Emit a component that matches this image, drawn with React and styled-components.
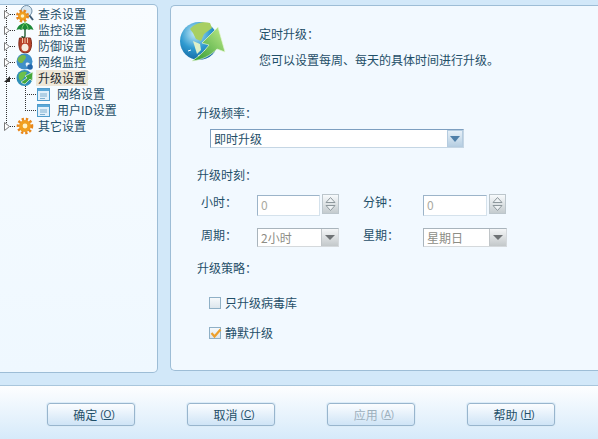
import React from "react";
import styled, { createGlobalStyle } from "styled-components";

const Global = createGlobalStyle`
  html, body { margin: 0; padding: 0; background: #d2e8f9; }
  * { box-sizing: border-box; }
  body { font-family: "Noto Sans CJK SC", "Liberation Sans", sans-serif; font-size: 12px; color: #1f4f68; }
`;

const Dialog = styled.div`
  width: 598px; height: 439px; display: flex; flex-direction: column; overflow: hidden;
  background: #d2e8f9; line-height: 16px;
`;
const Main = styled.div`
  height: 386px; flex: none; display: flex; align-items: flex-start; border-bottom: 1px solid #a9c6dc;
  padding-top: 4px;
`;
const Sidebar = styled.nav`
  width: 158px; height: 369px; flex: none; background: linear-gradient(#f8fcff, #eff8ff);
  border: 1px solid #9dbdd6; border-left: none; border-radius: 0 5px 5px 0; padding-top: 1px;
`;
const Panel = styled.section`
  width: 428px; height: 366px; margin: 1px 0 0 12px; flex: none; background: #f2f9ff;
  border: 1px solid #9dbdd6; border-right: none; border-radius: 5px 0 0 5px; padding: 14px 0 0 9px;
`;
const Row = styled.div`
  height: 16px; display: flex; align-items: center; flex: none;
`;
const Label = styled.span`
  margin-left: ${p => p.$gap ?? 4}px; height: 16px; line-height: 15px; padding: 0 2px;
  background: ${p => (p.$active ? "#efe8d9" : "transparent")};
  color: ${p => (p.$active ? "#1d2b30" : "#1f4f68")};
`;
const Head = styled.header`
  display: flex; height: 77px;
`;
const HeadText = styled.div`
  margin-left: 31px; padding-top: 6px; display: flex; flex-direction: column; gap: 10px;
`;
const Line = styled.p`
  margin: 0; height: 16px; line-height: 16px;
`;
const Form = styled.div`
  padding-left: 17px;
`;
const Heading = styled.h3`
  margin: ${p => p.$top ?? 0}px 0 0; font-size: 12px; font-weight: 400; height: 16px; line-height: 16px;
`;
const Freq = styled.div`
  margin: 8px 0 0 13px; width: 254px; height: 19px; display: flex; background: #fff;
  border: 1px solid #c5d6e4; border-top-color: #7d9fc0; border-left-color: #7d9fc0; padding-left: 3px;
  align-items: center; justify-content: space-between; color: #1f4f68;
`;
const DropBlue = styled.div`
  width: 16px; height: 17px; background: linear-gradient(#e6f0f8, #b7cfe2); border: 1px solid #b5cce0;
  display: flex; align-items: center; justify-content: center;
  &::after { content: ""; border: 5px solid transparent; border-top: 6px solid #4f7fa8; border-bottom: 0; }
`;
const Grid = styled.div`
  margin: 11px 0 0 4px; display: grid; grid-template-columns: 56px 82px 24px 60px 84px; grid-auto-rows: 21px; row-gap: 12px;
  align-items: center;
`;
const FieldLabel = styled.span`
  height: 16px; line-height: 16px; margin-top: -5px;
`;
const Spin = styled.div`
  display: flex; gap: 2px; align-items: flex-start;
`;
const NumInput = styled.div`
  width: 64px; height: 21px; background: #fff; color: #a9a9a0; padding-left: 3px; line-height: 18px;
  border: 1px solid #d5e2ec; border-top-color: #9cb4c9; border-left-color: #9cb4c9;
  margin-top: 1px;
`;
const SpinBtn = styled.div`
  width: 17px; height: 20px; border: 1px solid #bcc6cc; background: linear-gradient(#f7fafc, #c4cbce);
  display: flex; flex-direction: column; align-items: center; justify-content: center; gap: 2px;
`;
const Select = styled.div`
  width: ${p => p.$w}px; height: 19px; display: flex; justify-content: space-between; align-items: center;
  background: #fff; color: #8d8d85; padding-left: 3px; border: 1px solid #d5d9dc; border-left-color: #a9b4bc; border-top-color: #a9b4bc;
`;
const DropGray = styled.div`
  width: 17px; height: 17px; background: linear-gradient(#f4f6f7, #c3c8ca); border-left: 1px solid #c0c5c8;
  display: flex; align-items: center; justify-content: center;
  &::after { content: ""; border: 5px solid transparent; border-top: 5px solid #6f7375; border-bottom: 0; }
`;
const Check = styled.label`
  margin: ${p => p.$top}px 0 0 12px; display: flex; align-items: center; gap: 4px; height: 16px; color: #1f4f68;
`;
const Box = styled.span`
  width: 12px; height: 12px; flex: none; border: 1px solid #8fb0c6; background: linear-gradient(#f6f9fb, #dde6ec);
  display: block; overflow: visible;
  svg { display: block; margin: -1px 0 0 0; }
`;
const Footer = styled.footer`
  flex: 1; background: linear-gradient(#fdfeff, #d6eafa); display: flex; padding: 17px 0 0 47px; gap: 52px;
`;
const Btn = styled.button`
  width: 88px; height: 23px; padding: 0 0 0 6px; font: inherit; line-height: 19px;
  color: ${p => (p.disabled ? "#9db0bd" : "#1f4f68")};
  background: linear-gradient(#fbfdff, #cfe4f6); border: 1px solid #98b5cd; border-radius: 3px;
  box-shadow: 0 0 0 1px #dcecf8; display: flex; align-items: center; justify-content: center; gap: 3px;
  u { font-family: "Liberation Sans", sans-serif; text-decoration: none; font-size: 10px; }
  u b { font-weight: 400; text-decoration: underline; }
`;
const Glyph = styled.svg`
  flex: none; display: block;
`;

const Guide = ({ exp, last, sub, subLast, open }) => (
  <Glyph width={sub ? 37 : 16} height="16" viewBox={`0 0 ${sub ? 37 : 16} 16`}>
    <g stroke="#333" strokeWidth="1" strokeDasharray="1 1" fill="none">
      {!last && <line x1="6.5" y1={0} x2="6.5" y2={16} />}
      {last && <line x1="6.5" y1={0} x2="6.5" y2={8} />}
      {sub ? (
        <>
          <line x1="25.5" y1="0" x2="25.5" y2={subLast ? 8 : 16} />
          <line x1="25" y1="8.5" x2="37" y2="8.5" />
        </>
      ) : (
        <line x1="10" y1="8.5" x2="16" y2="8.5" />
      )}
    </g>
    {exp && (open ? (
      <polygon points="4,12 10,6 10,12" fill="#2a2a2a" />
    ) : (
      <polygon points="4.5,4.5 4.5,12.5 9.5,8.5" fill="#fff" stroke="#7a7a7a" />
    ))}
  </Glyph>
);

const Gear = ({ x = 0, y = 0, r = 5 }) => (
  <g transform={`translate(${x} ${y})`}>
    <circle r={r} fill="#f0a020" />
    <circle r={r} fill="none" stroke="#e8861a" strokeWidth="2.4" strokeDasharray="2 1.6" transform="scale(1.15)" />
    <circle r={r * 0.4} fill="#fff3c8" />
  </g>
);

const IconScan = () => (
  <Glyph width="18" height="18" viewBox="0 0 18 18">
    <circle cx="10.5" cy="6" r="5.500" fill="#d6e6f2" stroke="#6f8ea6" />
    <line x1="13.5" y1="10.5" x2="17" y2="15" stroke="#3c5a74" strokeWidth="2" />
    <Gear x={6.5} y={11} r={4.500} />
  </Glyph>
);
const IconUmbrella = () => (
  <Glyph width="18" height="18" viewBox="0 0 18 18">
    <path d="M0.500 9C2 4 6 2 9 2s7 2 8.500 7c-2-1-3.500-1-4.500 0-1-1-3-1-4 0-1-1-3-1-4 0-1-1-2.500-1-4.500 0z" fill="#1c8a38" />
    <path d="M9 0v2M9 2c-2 2-3 4-3 6M9 2c2 2 3 4 3 6" stroke="#7ccf6a" fill="none" />
    <path d="M9 8v7c0 2-3 2-3 0" stroke="#1f5a30" strokeWidth="1.4" fill="none" />
  </Glyph>
);
const IconGlove = () => (
  <Glyph width="18" height="18" viewBox="0 0 18 18">
    <path d="M3.500 1h11c1.500 4 1.500 9-.5 12.500-1 3-7.500 3-9.500.5C2.500 11 2.500 5 3.500 1z" fill="#b8432a" stroke="#7d2c1c" />
    <path d="M6.500 1v5M9 1v5M11.500 1v5" stroke="#f2c8a8" />
    <ellipse cx="9" cy="10.500" rx="3.500" ry="3.800" fill="#f6ede0" />
  </Glyph>
);
const IconGlobe = () => (
  <Glyph width="18" height="18" viewBox="0 0 18 18">
    <circle cx="8.500" cy="8.500" r="8" fill="#3f8fc9" />
    <path d="M3 4c3-3 7-2 7 0s-2 3-3 5-4 1-5-1 0-3 1-4z" fill="#76b84a" />
    <path d="M10 10c2-1 4 0 4 2s-2 3-3 2-2-3-1-4z" fill="#e8f2f8" />
    <circle cx="14" cy="14" r="2.800" fill="#2266aa" />
  </Glyph>
);
const IconUpdate = () => (
  <Glyph width="18" height="18" viewBox="0 0 18 18">
    <circle cx="8.500" cy="9" r="8" fill="#2f8fb8" />
    <path d="M3 5c2-3 6-3 8-2l-3 6-3 3c-2-1-3-4-2-7z" fill="#6cc04a" />
    <path d="M5 13l6-4-2-2 8-4-1 9-2-2-5 5c-1 0-3-1-4-2z" fill="#43a83a" stroke="#e9f7e2" strokeWidth=".7" />
  </Glyph>
);
const IconDoc = () => (
  <Glyph width="13" height="13" viewBox="0 0 13 13">
    <rect x=".5" y=".5" width="12" height="12" fill="#e2f0fa" stroke="#4f9ccc" />
    <rect x="1" y="1" width="11" height="2" fill="#5aa8d8" />
    <path d="M3 6h7M3 8h7M3 10.500h5" stroke="#7fb0d0" />
  </Glyph>
);
const IconOther = () => (
  <Glyph width="18" height="18" viewBox="-9 -9 18 18">
    <Gear r={6} />
  </Glyph>
);
const IconLarge = () => (
  <Glyph width="48" height="44" viewBox="0 0 48 44">
    <defs>
      <radialGradient id="g" cx=".4" cy=".3" r=".8">
        <stop offset="0" stopColor="#c8ecf8" />
        <stop offset=".5" stopColor="#2f9ad0" />
        <stop offset="1" stopColor="#105c98" />
      </radialGradient>
      <linearGradient id="a" x1="0" y1="1" x2="1" y2="0">
        <stop offset="0" stopColor="#2f9a32" />
        <stop offset="1" stopColor="#c2ec8a" />
      </linearGradient>
    </defs>
    <circle cx="19" cy="21" r="19" fill="url(#g)" />
    <path d="M10 9c5-6 13-8 20-6l2 5-8 6-3 7-5-2-3-6-3-4z" fill="#a8cf62" />
    <path d="M13 21l7 3 1 6-4 4z" fill="#dff0c8" />
    <path d="M8 31l3-1M24 31l3-2M18 36l2-1" stroke="#fff" strokeWidth="1" />
    <path d="M12 41C22 40 30 36 37 29L45 32L38 7L22 23L29 25C24 32 18 37 12 41z" fill="url(#a)" stroke="#e4f6d2" strokeWidth=".7" />
  </Glyph>
);
const Spinner = () => (
  <SpinBtn>
    <svg width="11" height="6" viewBox="0 0 11 6"><path d="M1 5.500L5.500 .5 10 5.500z" fill="#eef2f4" stroke="#8d979c" /></svg>
    <svg width="11" height="6" viewBox="0 0 11 6"><path d="M1 .5L5.500 5.500 10 .5z" fill="#eef2f4" stroke="#8d979c" /></svg>
  </SpinBtn>
);

const tree = [
  { t: "查杀设置", I: IconScan },
  { t: "监控设置", I: IconUmbrella },
  { t: "防御设置", I: IconGlove },
  { t: "网络监控", I: IconGlobe },
  { t: "升级设置", I: IconUpdate, active: true, open: true },
  { t: "网络设置", sub: true },
  { t: "用户ID设置", sub: true, subLast: true },
  { t: "其它设置", I: IconOther, last: true },
];

export default function App() {
  return (
    <Dialog>
      <Global />
      <Main>
        <Sidebar>
          {tree.map(({ t, I, active, open, sub, subLast, last }) => (
            <Row key={t}>
              <Guide exp={!sub} sub={sub} subLast={subLast} last={last} open={open} />
              {sub ? <IconDoc /> : <I />}
              <Label $active={active} $gap={sub ? 5 : 2}>{t}</Label>
            </Row>
          ))}
        </Sidebar>
        <Panel>
          <Head>
            <IconLarge />
            <HeadText>
              <Line>定时升级：</Line>
              <Line>您可以设置每周、每天的具体时间进行升级。</Line>
            </HeadText>
          </Head>
          <Form>
            <Heading $top={8}>升级频率：</Heading>
            <Freq>即时升级<DropBlue /></Freq>
            <Heading $top={19}>升级时刻：</Heading>
            <Grid>
              <FieldLabel>小时：</FieldLabel>
              <Spin><NumInput>0</NumInput><Spinner /></Spin>
              <span />
              <FieldLabel>分钟：</FieldLabel>
              <Spin><NumInput>0</NumInput><Spinner /></Spin>
              <FieldLabel>周期：</FieldLabel>
              <Select $w={82}>2小时<DropGray /></Select>
              <span />
              <FieldLabel>星期：</FieldLabel>
              <Select $w={84}>星期日<DropGray /></Select>
            </Grid>
            <Heading $top={12}>升级策略：</Heading>
            <Check $top={19}><Box />只升级病毒库</Check>
            <Check $top={14}>
              <Box>
                <svg width="12" height="12" viewBox="0 0 12 12">
                  <path d="M1.500 6l3 3.500L10.500 2.500" fill="none" stroke="#eda02c" strokeWidth="2.200" />
                </svg>
              </Box>
              静默升级
            </Check>
          </Form>
        </Panel>
      </Main>
      <Footer>
        <Btn>确定<u>(<b>O</b>)</u></Btn>
        <Btn>取消<u>(<b>C</b>)</u></Btn>
        <Btn disabled>应用<u>(<b>A</b>)</u></Btn>
        <Btn>帮助<u>(<b>H</b>)</u></Btn>
      </Footer>
    </Dialog>
  );
}
